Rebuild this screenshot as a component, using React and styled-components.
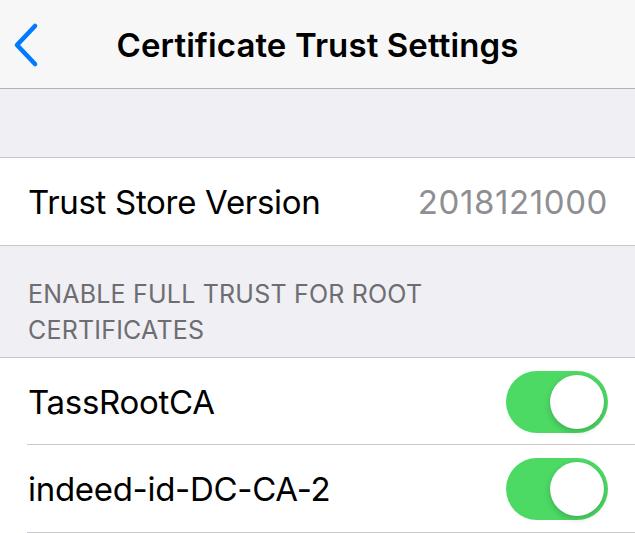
import React from 'react';
import styled, { createGlobalStyle } from 'styled-components';

const Global = createGlobalStyle`
  html, body { margin: 0; padding: 0; background: #efeff4; }
  body { font-family: Inter, "Noto Sans", "Liberation Sans", sans-serif; -webkit-font-smoothing: antialiased; }
`;

const Screen = styled.div`
  width: 635px;
  height: 533px;
  overflow: hidden;
  background: #efeff4;
`;

const NavBar = styled.div`
  height: 88px;
  background: #f7f7f8;
  border-bottom: 1px solid #b2b2b6;
  display: flex;
  align-items: center;
  justify-content: center;
  position: relative;
`;

const Back = styled.button`
  position: absolute;
  left: 12px;
  top: 22px;
  border: 0;
  background: none;
  padding: 0;
  display: flex;
`;

const Title = styled.h1`
  margin: 0;
  font-size: 33px;
  font-weight: 600;
  color: #000;
  letter-spacing: 0.1px;
  padding-top: 2px;
`;

const Spacer = styled.div`
  height: ${(p) => p.h}px;
`;

const Group = styled.div`
  background: #fff;
  border-top: 1px solid #c8c7cc;
  border-bottom: ${(p) => (p.inset ? 'none' : '1px solid #c8c7cc')};
`;

const Row = styled.div`
  height: ${(p) => p.h}px;
  padding: 0 28px;
  display: flex;
  align-items: center;
  justify-content: space-between;
  box-sizing: border-box;
  position: relative;
  ${(p) => p.inset && `
    &::after {
      content: '';
      position: absolute;
      left: 27px;
      right: 0;
      bottom: 0;
      height: 1px;
      background: #c8c7cc;
    }
  `}
`;

const Label = styled.span`
  font-size: 33px;
  color: #000;
  letter-spacing: -0.3px;
`;

const Value = styled.span`
  font-size: 33px;
  color: #8e8e93;
  letter-spacing: 0.6px;
  margin-right: -1px;
`;

const SectionHeader = styled.div`
  height: 111px;
  padding: 30px 28px 0;
  box-sizing: border-box;
  font-size: 25px;
  line-height: 36px;
  color: #6d6d72;
  letter-spacing: 0.2px;
  width: 500px;
`;

const Track = styled.div`
  width: 102px;
  height: 62px;
  border-radius: 31px;
  background: ${(p) => (p.on ? '#4cd964' : '#e5e5ea')};
  position: relative;
  margin-right: -1px;
`;

const Knob = styled.div`
  position: absolute;
  top: 4px;
  left: ${(p) => (p.on ? '44px' : '4px')};
  width: 54px;
  height: 54px;
  border-radius: 50%;
  background: #fff;
  box-shadow: 0 3px 6px rgba(0, 0, 0, 0.18), 0 0 1px rgba(0, 0, 0, 0.12);
`;

function Toggle({ on }) {
  return (
    <Track on={on}>
      <Knob on={on} />
    </Track>
  );
}

export default function App() {
  return (
    <Screen>
      <Global />
      <NavBar>
        <Back aria-label="Back">
          <svg width="28" height="46" viewBox="0 0 28 46">
            <path d="M23 4 L5 23 L23 42" fill="none" stroke="#007aff" strokeWidth="4.6" strokeLinecap="round" strokeLinejoin="round" />
          </svg>
        </Back>
        <Title>Certificate Trust Settings</Title>
      </NavBar>
      <Spacer h={68} />
      <Group>
        <Row h={87}>
          <Label>Trust Store Version</Label>
          <Value>2018121000</Value>
        </Row>
      </Group>
      <SectionHeader>ENABLE FULL TRUST FOR ROOT CERTIFICATES</SectionHeader>
      <Group inset>
        <Row h={87} inset>
          <Label>TassRootCA</Label>
          <Toggle on />
        </Row>
        <Row h={88} inset>
          <Label>indeed-id-DC-CA-2</Label>
          <Toggle on />
        </Row>
      </Group>
    </Screen>
  );
}
